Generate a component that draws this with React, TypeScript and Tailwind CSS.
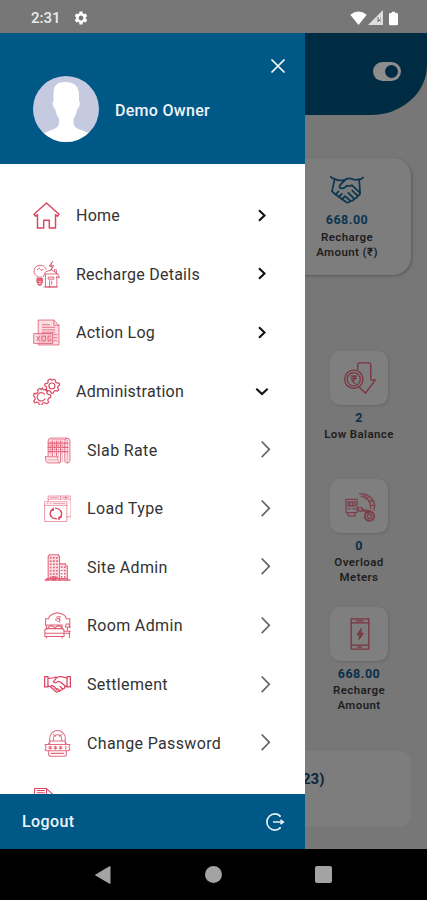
import type { ReactNode } from "react";
import { MdSettings } from "react-icons/md";

function Icon({ children, className = "" }: { children: ReactNode; className?: string }) {
  return (
    <svg
      viewBox="0 0 26 26"
      fill="none"
      stroke="currentColor"
      strokeWidth="1"
      strokeLinecap="round"
      strokeLinejoin="round"
      className={`shrink-0 ${className}`}
    >
      {children}
    </svg>
  );
}

const HomeIcon = () => (
  <g strokeWidth="1.4">
    <path d="M1 11.8 13 1l12 10.8-1.4 1.9-1.9-1.5V25h-6v-7.5h-5.4V25h-6V12.2l-1.9 1.5z" />
  </g>
);

const RechargeIcon = () => (
  <g strokeWidth=".9" strokeOpacity=".85">
    <path d="M4.500 15.500C2.500 13.500.8 12 1 9.500a6 6 0 0 1 11.600-1.500M4.500 15.500h4M4 8.500l2-1.500 2 2 2-1" />
    <path d="M4 17h5v3l-1.500 3h-2L4 20zM4.500 18.500h4M4.500 20.500h4" strokeWidth="1.500" />
    <path d="M18.500.8 15.500 5h3l-1.200 3.800L20 4.500h-2.600z" />
    <path d="m10 15 2-4.500 6-2 6 4 1.500 3.500-3-.5M12 13v12h11V15M12 12.500h11M10.500 25h13M20.500 10V8.500h2V12" />
    <path d="M15 15.500h5v2h-5zM18 19.500v3M16 25v-6" />
  </g>
);

const LogIcon = () => (
  <g strokeWidth=".9" strokeOpacity=".75">
    <path d="M5 14V1h15l5 5v19H5v-1" fill="#e8506a" fillOpacity=".18" />
    <path d="M20 1v5h5M9 5.500h7M9 8h12M9 10.500h12M9 12.800h12" />
    <path d="M1 14h18v9.500H1z" fill="#e8506a" fillOpacity=".18" />
    <path d="m3.500 16.500 3 4.500M6.500 16.500l-3 4.500M9 16.500h3v4.500H9zM17 16.500h-2.500V21H17v-2M20 15h3M20 18h3M20 21h3" />
  </g>
);

const GearsIcon = () => (
  <g strokeWidth="1.100">
    <path d="m9 9.500 1.200 2 2.600-.6 1.400 1.700-1 2 1.800 1.500 2 .2.200 2.500-2.100.6-.9 1.900.9 2-2 1.600-1.900-1.300-2 .7-.7 2H6l-.4-2.200-1.900-.9-2 .8L.600 22.200l1.500-1.600-.4-2L.500 17.300l.6-2.500 2.200.2 1.500-1.500-.3-2.200L6.600 10l1.500 1.300z" />
    <path d="M11 15.500a4 4 0 1 0 .5 4.500" />
    <path d="m17 1 1.300 1.200 1.900-.9 1.500 1 .1 1.700 1.600.9 1.800.1.300 2-1.600 1.100-.1 1.600 1 1.600-1.300 1.300-1.900-.6-1.500.9-.6 1.700-2-.1-.7-1.700-1.600-.7-1.800.8-1.200-1.500 1-1.600-.5-1.600-1.500-1 .5-1.800 1.900-.2 1-1.300-.3-1.700 1.500-1z" />
    <circle cx="18.200" cy="7.700" r="2.900" />
  </g>
);

const SlabIcon = () => (
  <g strokeWidth=".9" strokeOpacity=".75">
    <path d="M4 18V4q0-3 3-3h15q-2 1-2 4v18q.500 2 2.500 2t2.500-2V4q0-3-3-3" fill="#e8506a" fillOpacity=".15" />
    <path d="M1.500 19h12q-1 4 2 6H4q-3-.500-2.500-6z" fill="#e8506a" fillOpacity=".15" />
    <path d="M8 4v14M12 4v14M16 4v20M4 6h19M4 10h19M4 14h19" strokeWidth="1.200" />
    <path d="M7 2.500h14M4 8h16M4 12h16M6 4v14M10 4v14M14 4v15M18 4v20M4 22h8M22.500 3v22" strokeOpacity=".4" />
  </g>
);

const LoadIcon = () => (
  <g strokeWidth=".8" strokeOpacity=".65">
    <path d="M4 6V1h22v20h-4M4 4h22M16 1v3M21 1v3M6 2.500h8M18 2.500h6" />
    <path d="M1 6.500h21v19H1zM1 10h21M3 8.300h1M6 8.300h1M9 8.300h11" />
    <path d="M9 13.500a5.200 5.200 0 0 0-2.500 7M14 22.600a5.200 5.200 0 0 0 2.500-7" strokeWidth="1.400" strokeOpacity="1" />
    <path d="m11 12.500 4 1.500 1 2M12 23l-4-1-1.300-2M9 12.500v2.200H6.800M14.500 23.500v-2.200h2.300" strokeWidth="1.100" strokeOpacity="1" />
  </g>
);

const SiteIcon = () => (
  <g strokeWidth="1" strokeOpacity=".8">
    <path d="M4 25V2h1V.8h9V2h1v23M15 9.500h6v2h1.500V25M2.500 25v-1.500h20V25" fill="#e8506a" fillOpacity=".2" />
    <path d="M1 25h24" strokeWidth="1.300" />
    <path d="M6.500 3v20M9.500 3v20M12.500 3v20M17 12v11M20 12v11" strokeDasharray="1.500 1.600" strokeLinecap="butt" strokeWidth="1.600" />
    <path d="M8 22h3v3H8z" />
  </g>
);

const RoomIcon = () => (
  <g strokeWidth="1" strokeOpacity=".85">
    <path d="M1.500 13V6.500h3Q4.500 2.500 13 .8q8.500 1.700 8.500 5.700h3.300V15" />
    <path d="M11 7.500 15 10V6zM12 5l4 3M13 4.500h3" strokeWidth=".8" />
    <path d="M2.500 16v-3.500h15V16M4 15.500q0-2 3-2t3 2M11 15.500q0-2 3-2t3 2" />
    <path d="M.8 23.500V18q0-2 2-2h14.500q2 0 2 2v5.500zM.8 20.500h18.500M2.500 23.500V25M17.500 23.500V25" />
    <path d="M19.500 18.500h6M20 20.500h5M24.500 19v5.500M22.500 18.500v-4M20.500 14.500l1-3h2.500l1 3z" />
  </g>
);

// wide outline handshake of the dashboard card
const Handshake = () => (
  <g strokeWidth="1.300">
    <path d="M.6 3.300q1 1.500 3 1.600L1.500 14.500l2.800 2.300 8 5.800q2.200 1.200 3.200-1 2.500.5 3-1.700 2.300.2 2.500-2.200 2 0 2-2.200L22.300 5.300q2 0 3-1.500" />
    <path d="M3.600 4.900q4 2.300 8.600.2M22.300 5.300q-3 .8-5.300-.3-3.500-1.300-5.800 1L7.500 9.800q-.8 2.200 1.500 2.400 2 0 4-2.200 2 .8 3.700-.3l6.300 5.800" />
    <path d="m11.500 18 4 3.600M14 15.500l4.500 4.400M17 13.800l4 3.900M4.300 16.800l2.200-2.300M6.800 18.600l2.200-2.300M9.300 20.400l1.700-1.700" />
  </g>
);

const SettlementIcon = () => (
  <g strokeWidth="1.200">
    <path d="M.6 5.500h3.200v9.800H.6zM22.200 5.500h3.200v9.800h-3.200zM4 7q5 0 7.500-1.200M22 7l-4-1.300q-4-1-6 1L9 10.500q2 2 4.500-.5 2 0 3.500 1.500l4 3.500" />
    <path d="m4 14.500 2 .5 5.500 5q1.500.8 2-.6 2 .6 2.500-1 2 .2 2.200-1.500 2 .3 1.800-1.700l2-.7M13 17l2 1.800M15.500 15l2 1.800M6 15q2-2.500 3 0 2 0 1.500 1.600 2 0 1.500 1.700" />
  </g>
);

const PasswordIcon = () => (
  <g strokeWidth="1" strokeOpacity=".8">
    <path d="M5.500 13V8a7.500 7.500 0 0 1 15 0v5M9 10.500V8.500a4 4 0 0 1 8 0v2M4.500 13l1.500-2.500h14l1.500 2.500M9 4.500l2 1.500M17 4.500 15 6" />
    <path d="M1 14h24l-1 2.500 1 2.500-1.500 1h-21L1 19l1-2.500z" />
    <path d="M6 15.500v3M4.700 16.200l2.600 1.600M7.300 16.200l-2.600 1.600M11 15.500v3M9.700 16.200l2.600 1.600M12.300 16.200l-2.600 1.600M16 15.500v3M14.700 16.200l2.600 1.600M17.300 16.200l-2.600 1.600M21 15.500v3" />
    <path d="M4.500 20v3.500Q4.500 25.300 7 25.300h12q2.500 0 2.500-1.800V20M7 22.500h12" />
  </g>
);

const ReportIcon = () => (
  <path d="M1.500 22V.5H13l6.500 6v15zM13 .5v6h6.500M4 2.500h7M4 4.500h7" />
);

const menuItems = [
  { label: "Home", icon: HomeIcon, arrow: "right" },
  { label: "Recharge Details", icon: RechargeIcon, arrow: "right" },
  { label: "Action Log", icon: LogIcon, arrow: "right" },
  { label: "Administration", icon: GearsIcon, arrow: "down" },
  { label: "Slab Rate", icon: SlabIcon, sub: true },
  { label: "Load Type", icon: LoadIcon, sub: true },
  { label: "Site Admin", icon: SiteIcon, sub: true },
  { label: "Room Admin", icon: RoomIcon, sub: true },
  { label: "Settlement", icon: SettlementIcon, sub: true },
  { label: "Change Password", icon: PasswordIcon, sub: true },
];

function Arrow({ kind }: { kind?: string }) {
  if (kind === "right")
    return (
      <svg viewBox="0 0 16 16" className="h-4 w-4" fill="none" stroke="#111" strokeWidth="2.100">
        <path d="m5 2.300 5.500 5.200L5 12.700" />
      </svg>
    );
  if (kind === "down")
    return (
      <svg viewBox="0 0 16 16" className="h-4 w-4" fill="none" stroke="#111" strokeWidth="2.100">
        <path d="m2.300 4.800 5.700 5.200 5.700-5.200" />
      </svg>
    );
  return (
    <svg viewBox="0 0 16 20" className="h-5 w-4" fill="none" stroke="#666" strokeWidth="1.700">
      <path d="m3.700 1.500 7.600 7.800-7.600 7.800" />
    </svg>
  );
}

function StatusBar() {
  return (
    <div className="flex h-[33px] items-center bg-[#777] pt-[3px] pl-[31px] pr-[28px] text-white">
      <span className="text-[15px] font-medium text-[#ececec]">2:31</span>
      <MdSettings className="ml-[12px] h-4 w-4" />
      <div className="ml-auto flex items-center">
        <svg viewBox="0 0 17 14" className="h-[14px] w-[17px]" fill="currentColor">
          <path d="M.3 3.800Q8.500-3 16.700 3.800L8.500 14z" />
        </svg>
        <svg viewBox="0 0 16 16" className="ml-px h-4 w-4">
          <path d="M0 15 15 0v15z" fill="#ddd" />
          <path d="M9.500 7h3v5h-3z" fill="#777" />
          <path d="M11.300 6.500v3M11.300 11v1.500" stroke="#fff" strokeWidth="1.200" />
        </svg>
        <svg viewBox="0 0 10 15" className="mr-px ml-[5px] h-[15px] w-[9px]" fill="currentColor">
          <path d="M3 0h4v1.500h1.500Q10 1.500 10 3v10.500Q10 15 8.500 15h-7Q0 15 0 13.500V3q0-1.500 1.500-1.500H3z" />
        </svg>
      </div>
    </div>
  );
}

function Tile({ value, label, children }: { value: string; label: ReactNode; children: ReactNode }) {
  return (
    <div className="flex h-32 w-[90px] flex-col items-center">
      <div className="flex h-[54px] w-[58px] items-center justify-center rounded-[10px] bg-[#7f7f7f] shadow-[1px_1px_3px_rgba(0,0,0,0.12)]">
        <Icon className="h-[34px] w-[34px] text-[#7c2636] opacity-85">{children}</Icon>
      </div>
      <p className="mt-[5px] text-[12.5px] leading-[15px] font-bold tracking-[0.5px] text-[#0a2f47]">{value}</p>
      <p className="mt-[2px] text-center text-[11.5px] leading-[15px] font-semibold tracking-[0.4px] whitespace-nowrap text-[#1e1e1e]">
        {label}
      </p>
    </div>
  );
}

function Dashboard() {
  return (
    <div className="flex h-full flex-col items-end bg-[#777]">
      <div className="flex h-[82px] w-full justify-end rounded-br-[56px_50px] bg-[#002c43] pt-[29px] pr-[26px]">
        <div className="flex h-[19px] w-[28px] items-center justify-end rounded-full bg-[#8d8d8d] pr-[3px]">
          <div className="h-[13px] w-[13px] rounded-full bg-[#002c43]" />
        </div>
      </div>

      <div className="mt-[43px] mr-4 flex h-[117px] w-[128px] flex-col items-center rounded-[18px] bg-[#7d7d7d] pt-[14px] shadow-[1px_1px_3px_rgba(0,0,0,0.25)]">
        <Icon className="h-[35px] w-[34px] text-[#0b3550]">
          <Handshake />
        </Icon>
        <p className="mt-[5px] text-[12.5px] leading-[15px] font-bold tracking-[0.5px] text-[#0b3550]">668.00</p>
        <p className="mt-[3px] text-center text-[11.5px] leading-[14.5px] font-semibold tracking-[0.4px] text-[#1e1e1e]">
          Recharge
          <br />
          Amount (₹)
        </p>
      </div>

      <div className="mt-[76px] mr-[23px] flex flex-col">
        <Tile value="2" label="Low Balance">
          <circle cx="9" cy="14" r="7" />
          <circle cx="9" cy="14" r="5" strokeDasharray="3 1" />
          <path d="M7 11.500h4M7 13.300h4M7.500 11.500q3 0 2.500 1.800t-2.500 1.500l2.500 2.500" />
          <path d="M12 6.500V3q0-1.500 1.500-1.500h7Q22 1.500 22 3v11.500h3.500L18 24.500l-4.500-4" />
        </Tile>
        <Tile
          value="0"
          label={
            <>
              Overload
              <br />
              Meters
            </>
          }
        >
          <g strokeOpacity=".8">
            <path d="M3 8h8.500v10H3zM4.500 9.800h5.500v3H4.500zM4.500 15h1.500M8.500 15H10M4.500 18v2.500H10V18M6 10.500V12M8 10.500V12" />
            <circle cx="14" cy="15.500" r="1.500" />
            <path d="m15.500 15.500 6 1.500M15.500 16.500l5.500 2" />
            <path d="M13.500 3.500q9.500 0 11.500 8.500l-.5 4M14.500 5.500l3 .5q3 1.500 4 5l.5 4M17 4v2.500M20.500 5.500l-2 2.500M23.500 8.500l-3 1.500M25 12.500h-3.300" />
            <circle cx="21" cy="20.800" r="3.500" strokeWidth="1.700" strokeDasharray="2 1" />
            <circle cx="21" cy="20.800" r="1.500" />
          </g>
        </Tile>
        <Tile
          value="668.00"
          label={
            <>
              Recharge
              <br />
              Amount
            </>
          }
        >
          <path d="M7 1.500h13.500v23H7zM7 4.500h13.500M7 21.500h13.500M11 3h5M12 23h3" />
          <path d="m14.800 9-3 4.500h2.200l-1 3.500 3-4.500h-2.200z" />
        </Tile>
      </div>

      <div className="mt-4 mr-4 flex h-[76px] w-[128px] rounded-[12px] bg-[#7d7d7d] pt-[18px] pl-[19px]">
        <p className="text-[15px] leading-5 font-bold text-[#0a2640]">23)</p>
      </div>
    </div>
  );
}

function Drawer() {
  return (
    <aside className="absolute inset-y-0 left-0 flex w-[305px] flex-col bg-white">
      <div className="flex h-[130.500px] shrink-0 bg-[#005886] pr-[19px] pl-[33px] text-white">
        <div className="mt-[43px] h-[66px] w-[66px] overflow-hidden rounded-full bg-[#c5cae1]">
          <svg viewBox="0 0 66 66" fill="#fff">
            <path d="M20.500 18Q20 6 32 6q14 0 14 13v6q1.500 1 .5 4.500-.5 2.500-2 3-1 6-4 10.500v5q1 4 8 6l9 4v9H9v-9l9-4q7-2 8-6v-5q-3-4.500-4-10.500-1.500-.5-2-3-1-3.500.5-4.500z" />
          </svg>
        </div>
        <p className="mt-[68px] ml-4 text-[16px] leading-5 font-medium tracking-[0.3px] text-[#eef4f9]">Demo Owner</p>
        <svg viewBox="0 0 16 16" className="mt-[25px] ml-auto h-4 w-4" stroke="#fff" strokeWidth="1.700">
          <path d="m1.500 1.500 13 13M14.500 1.500l-13 13" />
        </svg>
      </div>

      <nav className="min-h-0 flex-1 overflow-hidden pt-[23px]">
        {menuItems.map((item) => (
          <button
            key={item.label}
            className={`flex h-[58.600px] w-full items-center text-left text-[16px] text-[#333] ${
              item.sub ? "pr-[31px] pl-[44px] tracking-[0.350px]" : "pr-[35px] pl-[33px] tracking-[0.250px]"
            }`}
          >
            <Icon className="h-[27px] w-[27px] text-[#dc4460]">
              <item.icon />
            </Icon>
            <span className="ml-4 pt-px">{item.label}</span>
            <span className="ml-auto">
              <Arrow kind={item.arrow} />
            </span>
          </button>
        ))}
        <div className="flex h-[58.600px] items-center pl-[33px]">
          <Icon className="h-[27px] w-[27px] text-[#dc4460]">
            <ReportIcon />
          </Icon>
        </div>
      </nav>

      <div className="flex h-[55px] shrink-0 items-center bg-[#005886] pr-5 pl-[22px] text-white">
        <span className="pt-px text-[16px] font-medium tracking-[0.4px] text-[#eef4f9]">Logout</span>
        <svg viewBox="0 0 20 20" className="ml-auto h-5 w-5" fill="none" stroke="#e6f0f7" strokeWidth="1.700">
          <path d="M15 5V3.800Q13 1.900 10 1.900a8.100 8.100 0 0 0 0 16.200q3 0 5-1.900V15M8 10h10M15.500 7.800 18.300 10l-2.800 2.200" />
        </svg>
      </div>
    </aside>
  );
}

export default function App() {
  return (
    <div className="flex h-[900px] w-[427px] flex-col overflow-hidden font-['Roboto',sans-serif]">
      <StatusBar />
      <main className="relative min-h-0 flex-1 overflow-hidden">
        <Dashboard />
        <Drawer />
      </main>
      <div className="flex h-[51px] shrink-0 items-center justify-between bg-black pr-[95px] pl-[94px] text-[#a3a3a3]">
        <svg viewBox="0 0 18 18" className="h-[18px] w-[18px]" fill="currentColor">
          <path d="M16.500.8v16.400q0 1-1 .5L1.500 9.600q-.8-.6 0-1.200L15.500.3q1-.5 1 .5z" />
        </svg>
        <div className="h-[17px] w-[17px] rounded-full bg-current" />
        <div className="h-[17px] w-[17px] rounded-[2px] bg-current" />
      </div>
    </div>
  );
}
